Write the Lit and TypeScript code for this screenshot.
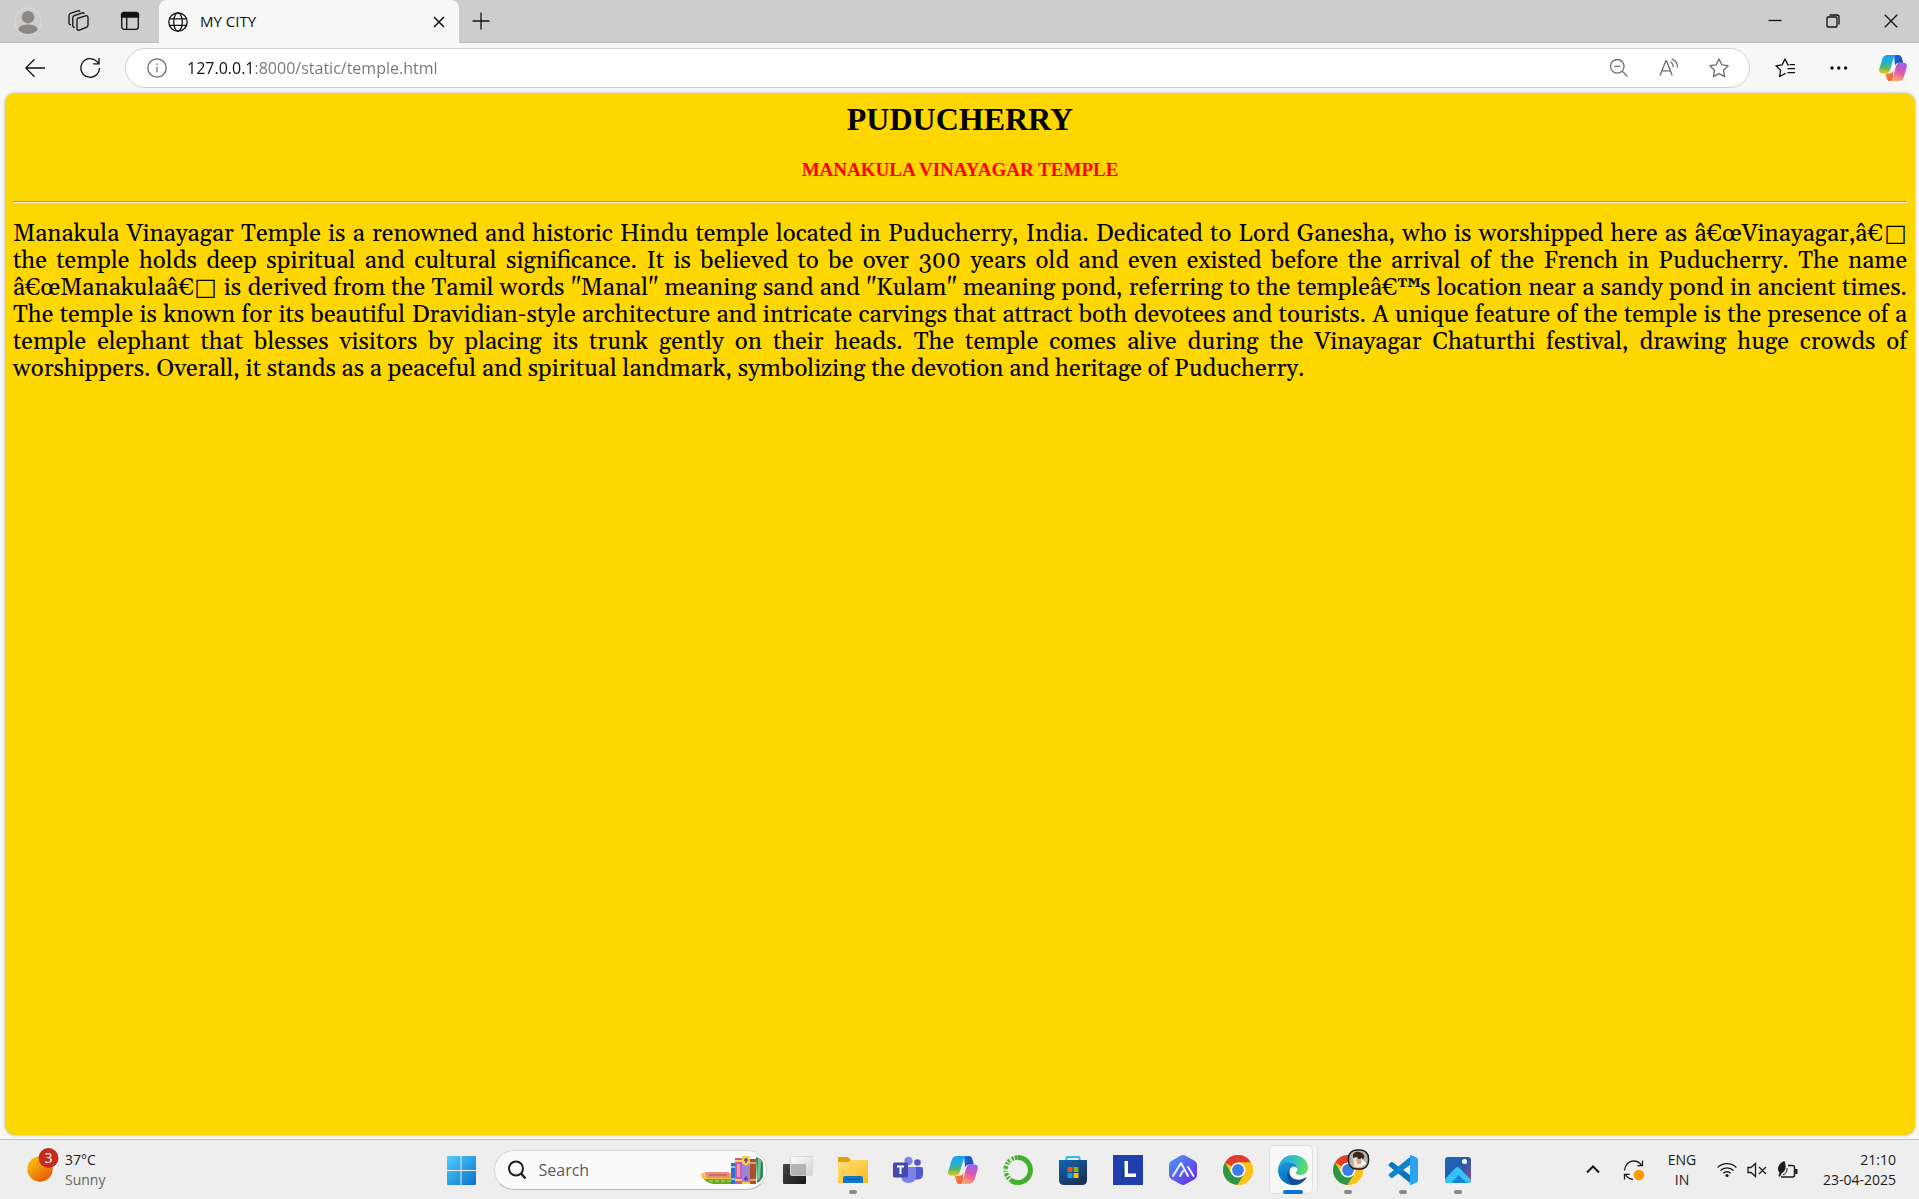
import { LitElement, html, svg, css, type TemplateResult } from "lit";
import { customElement, property } from "lit/decorators.js";
import { classMap } from "lit/directives/class-map.js";

/* Ribbon-shaped assistant logo, shared by the toolbar and the taskbar. */
const copilot = (id: string) => svg`
  <defs>
    <linearGradient id="${id}a" x1="0" y1="0" x2="0" y2="1">
      <stop offset="0" stop-color="#1aa0f0"/><stop offset=".4" stop-color="#22b0d8"/>
      <stop offset=".68" stop-color="#5ab860"/><stop offset="1" stop-color="#f0c818"/>
    </linearGradient>
    <linearGradient id="${id}b" x1=".7" y1="0" x2=".3" y2="1">
      <stop offset="0" stop-color="#9a60f0"/><stop offset=".5" stop-color="#e058a8"/><stop offset="1" stop-color="#ffae68"/>
    </linearGradient>
    <linearGradient id="${id}c" x1="0" y1="0" x2="1" y2="1">
      <stop offset="0" stop-color="#1b6fe0"/><stop offset="1" stop-color="#1b3fae"/>
    </linearGradient>
    <linearGradient id="${id}d" x1="0" y1="0" x2="1" y2="1">
      <stop offset="0" stop-color="#f8a030"/><stop offset="1" stop-color="#f04a48"/>
    </linearGradient>
  </defs>
  <path fill="url(#${id}c)" d="M15 1h4.500c1.800 0 2.600 1 3.100 2.600l1.600 5.200h-4c-2.200 0-3.600 1-4.200 3z"/>
  <path fill="url(#${id}d)" d="M13.500 27H11c-1.900 0-2.700-1-3.200-2.600L6.300 19.400h4c2.300 0 3.400-1.200 4-3.100z"/>
  <path fill="url(#${id}a)" d="M8.600 1h8.300c-1.500.6-2 2-2.500 3.700l-3.300 11c-.8 2.600-2 3.700-4.400 3.700H3.600C.6 19.400-.4 17.600.400 14.600l2.700-9C4 2.600 5.700 1 8.600 1z"/>
  <path fill="url(#${id}b)" d="M19.400 27h-8c1.300-.6 1.900-2 2.400-3.700l3.200-11c.8-2.500 2-3.500 4.300-3.500h3.100c3 0 4 1.700 3.200 4.800l-2.700 8.900c-.9 3-2.600 4.500-5.500 4.500z"/>`;

const chrome = svg`
  <circle cx="15" cy="15" r="15" fill="#fbc116"/>
  <path fill="#e33b2e" d="M15 15 2 7.500A15 15 0 0 1 28 7.500H15z"/>
  <path fill="#2b9746" d="M2 7.500A15 15 0 0 0 14.500 30L21.500 18.700 15 15 8.500 18.700z"/>
  <path fill="#fbc116" d="M15 7.500h13A15 15 0 0 1 14.500 30l7-11.300z"/>
  <circle cx="15" cy="15" r="7.500" fill="#fff"/>
  <circle cx="15" cy="15" r="5.900" fill="#3b7de9"/>`;

const icons: Record<string, TemplateResult> = {
  avatar: html`<svg class="icon" width="28" height="28" viewBox="0 0 28 28">
    <defs><clipPath id="av"><circle cx="14" cy="14" r="13"/></clipPath></defs>
    <circle cx="14" cy="14" r="13" fill="#cfcdcb" stroke="#dedcda" stroke-width="1.200"/>
    <g clip-path="url(#av)" fill="#8c8886"><circle cx="14" cy="10.200" r="6.200"/><path d="M3.500 23.500c1-4 5-6 10.500-6s9.500 2 10.500 6a14 14 0 0 1-21 0z"/></g></svg>`,
  workspaces: html`<svg class="icon line" width="22" height="22" viewBox="0 0 22 22">
    <path d="M9.500 8.300 17.500 5.800q2.500-.6 2.500 1.700v7.700q0 1.300-1.300 1.900l-7.300 3q-2.400.6-2.400-1.600V10.200q0-1.300.5-1.900z"/>
    <path d="M6.800 17.400q-2 .2-2-1.800V7.800q0-1.600 1.600-2.200l7.800-2.800q1.700-.4 2.100 1.100"/>
    <path d="M3 14.800q-2 0-2-1.900V5.500q0-1.500 1.500-2.200l7.300-2.500q1.600-.4 2 .900"/></svg>`,
  tabs: html`<svg class="icon line" width="20" height="20" viewBox="0 0 20 20">
    <rect x="1.700" y="2" width="16.600" height="16.300" rx="2.600"/><path d="M1.500 6V4q0-2.500 2.500-2.500h12q2.500 0 2.500 2.500v2z" fill="currentColor"/><path d="M6.700 6v12"/></svg>`,
  globe: html`<svg class="icon line" width="20" height="20" viewBox="0 0 20 20">
    <circle cx="10" cy="10" r="9.200"/><ellipse cx="10" cy="10" rx="4.300" ry="9.200"/><path d="M1.700 6.800h16.600M1.700 13.300h16.600"/></svg>`,
  closeTab: html`<svg class="icon line" width="12" height="12" viewBox="0 0 12 12"><path stroke-width="1.500" d="m1 1 10 10M11 1 1 11"/></svg>`,
  plus: html`<svg class="icon line" width="18" height="18" viewBox="0 0 18 18"><path d="M9 .5v17M.5 9h17"/></svg>`,
  minimize: html`<svg class="icon line" width="14" height="14" viewBox="0 0 14 14"><path d="M.5 6.500h13"/></svg>`,
  restore: html`<svg class="icon line" width="14" height="14" viewBox="0 0 14 14"><rect x="1" y="3" width="10" height="10" rx="1"/><path d="M3.500 1H11q2 0 2 2v7.500"/></svg>`,
  close: html`<svg class="icon line" width="14" height="14" viewBox="0 0 14 14"><path d="m.8.800 12.400 12.400M13.200.8.800 13.200"/></svg>`,
  back: html`<svg class="icon line" width="20" height="20" viewBox="0 0 20 20"><path d="M20 10H.8M9.500 1.300.8 10l8.700 8.700"/></svg>`,
  reload: html`<svg class="icon line" width="22" height="22" viewBox="0 0 22 22"><path d="M20.500 11A9.300 9.300 0 1 1 17.800 4.400l1.900 2M20 1v5.800h-5.800"/></svg>`,
  info: html`<svg class="icon line" width="20" height="20" viewBox="0 0 20 20"><circle cx="10" cy="10" r="9.200"/><path d="M10 8.800v5.500M10 5.400v1.500"/></svg>`,
  zoomOut: html`<svg class="icon line" width="20" height="20" viewBox="0 0 20 20"><circle cx="8.300" cy="8.300" r="6.800"/><path d="m13.300 13.300 5.200 5.200M5.300 8.300h6"/></svg>`,
  read: html`<svg class="icon line" width="20" height="20" viewBox="0 0 20 20"><path d="M1 17.500 6.800 3h.7l5.700 14.500M3 12.800h8.200M11.200 3.800a6 6 0 0 1 3 5.500M12.800.8c3.600 1.500 5.700 4.700 5.700 8.800"/></svg>`,
  star: html`<svg class="icon line" width="20" height="20" viewBox="0 0 20 20"><path stroke-linejoin="round" d="m10 1 2.800 5.800 6.300.9-4.600 4.500 1.100 6.400L10 15.600l-5.600 3 1.100-6.400L.9 7.700l6.300-.9z"/></svg>`,
  favorites: html`<svg class="icon line" width="20" height="20" viewBox="0 0 20 20"><path stroke-linejoin="round" d="M10.500 15.400 4.600 18.500l1-6.200L1 7.800l6.100-.9L10 1l2.900 5.900 1 .2M12.500 10.700H20M12.500 14.700H20M14.500 6.700H20"/></svg>`,
  more: html`<svg class="icon" width="18" height="6" viewBox="0 0 18 6"><g fill="#111"><circle cx="2" cy="3" r="1.700"/><circle cx="8.800" cy="3" r="1.700"/><circle cx="15.600" cy="3" r="1.700"/></g></svg>`,
  copilotTop: html`<svg class="icon" width="28" height="28" viewBox="0 0 28 28">${copilot("p")}</svg>`,
  copilot: html`<svg class="icon" width="30" height="30" viewBox="0 0 28 28">${copilot("q")}</svg>`,
  weather: html`<svg class="icon" width="34" height="40" viewBox="0 0 34 40">
    <defs><linearGradient id="sun" x1=".1" y1=".1" x2=".8" y2=".9"><stop stop-color="#fbc30b"/><stop offset="1" stop-color="#e75b08"/></linearGradient></defs>
    <circle cx="13" cy="19" r="12.700" fill="url(#sun)"/><circle cx="21.500" cy="10" r="10" fill="#c42b1c" transform="translate(0 -2)"/>
    <text x="21.500" y="13" text-anchor="middle" font-size="14" fill="#fff">3</text></svg>`,
  start: html`<svg class="icon" width="30" height="30" viewBox="0 0 30 30">
    <defs><linearGradient id="st" x2="1" y2="1"><stop stop-color="#4fd0fb"/><stop offset="1" stop-color="#0a6fd0"/></linearGradient></defs>
    <path fill="url(#st)" d="M2 1h12.500v14H1V2q0-1 1-1zM15.500 1H29q1 0 1 1v13H15.500zM1 16h13.500v14H2q-1 0-1-1zM15.500 16H30v13q0 1-1 1H15.500z"/></svg>`,
  search: html`<svg class="icon" width="20" height="20" viewBox="0 0 20 20" fill="none" stroke="#222"><circle cx="9" cy="8.500" r="7" stroke-width="2"/><path d="m14 13.500 4.500 5" stroke-width="2.500"/></svg>`,
  books: html`<svg class="icon" width="64" height="30" viewBox="0 0 64 30">
    <path fill="#f3c545" d="M1 18h31v6H3q-2-2-2-6z"/><path fill="#f08a7c" d="M5 17h24l2 6H7z"/><path fill="#c96f61" d="M9 19h18v2H9z"/>
    <path fill="#6aa82c" d="M4 24h28v5H13q-6-1-9-5z"/><path stroke="#a4d44c" stroke-width="1.500" stroke-dasharray="4 2" d="M9 26h22"/>
    <rect x="31" y="8" width="4" height="21" fill="#2a72d4"/><path fill="#8cc0f4" d="M31 11h4v2h-4zM31 23h4v2h-4z"/>
    <rect x="35" y="3" width="7" height="26" fill="#cf5b9b"/><path fill="#f7cf70" d="M35 5h7v2h-7zM35 24h7v2h-7z"/><path fill="#e99ac4" d="M37 9h3v13h-3z"/>
    <rect x="42" y="1" width="8" height="28" fill="#a183da"/><path fill="#f5cf4a" d="M42 1h8v7l-4 3-4-3zM42 27h8v2h-8z"/><path stroke="#5a3ca8" stroke-width="1.500" d="M46 3v5M44 5h4M46 21v5M44 24h4"/>
    <rect x="50" y="4" width="6" height="25" fill="#a8512c"/><path fill="#eba15c" d="M50 7h6v2h-6zM50 24h6v2h-6z"/>
    <path fill="#2d8a55" d="M56 2q5 1 7 6v14q-2 4-6 6z"/><path fill="#75c394" d="m58 3 3 2-1 18-3 3z"/></svg>`,
  taskView: html`<svg class="icon" width="30" height="30" viewBox="0 0 30 30">
    <defs><linearGradient id="tv" x2="1" y2="1"><stop stop-color="#4a4946"/><stop offset="1" stop-color="#161616"/></linearGradient>
    <linearGradient id="tw" x2="1" y2="1"><stop stop-color="#fff"/><stop offset="1" stop-color="#cfcfcf"/></linearGradient></defs>
    <rect x="0" y="9" width="23" height="20" rx="1" fill="url(#tv)"/><rect x="7.500" y="1.500" width="22" height="19" rx="1" fill="url(#tw)" fill-opacity=".93" stroke="#d8d8d8"/>
    <path fill="#a6a6a6" fill-opacity=".75" d="M8 9h15v11.500H8z"/></svg>`,
  explorer: html`<svg class="icon" width="30" height="30" viewBox="0 0 30 30">
    <defs><linearGradient id="ex" x2="1" y2="1"><stop stop-color="#ffe07a"/><stop offset="1" stop-color="#fbb917"/></linearGradient></defs>
    <path fill="#e0a008" d="M0 3q0-1 1-1h8q1 0 2 1l2 2h16q1 0 1 1v5H0z"/><path fill="url(#ex)" d="M0 7h10q1 0 2-1l1-1h17v22q0 1-1 1H1q-1 0-1-1z"/>
    <path fill="#0f79c8" d="M5 28v-5q0-2 2-2h16q2 0 2 2v5z"/><path stroke="#0b4f91" d="M8 24.500h14"/></svg>`,
  teams: html`<svg class="icon" width="30" height="30" viewBox="0 0 30 30">
    <circle cx="15.500" cy="6" r="4.200" fill="#7b83eb"/><circle cx="24.500" cy="7.500" r="3.300" fill="#5059c9"/><path fill="#5059c9" d="M20 12h8.500q1.500 0 1.500 1.500V19q0 5-5 5.500h-5z"/>
    <path fill="#7b83eb" d="M10 12h11.500q1.500 0 1.500 1.500v7q0 7.500-7.500 7.500T8.500 21z"/><rect x="0" y="7.500" width="15" height="15" rx="1.500" fill="#444aaf"/>
    <path stroke="#fff" stroke-width="2" d="M4 11.500h7M7.500 11.500V19"/></svg>`,
  ring: html`<svg class="icon" width="30" height="30" viewBox="0 0 30 30" fill="none" stroke="#43b02a">
    <path stroke-width="5" d="M15 2.500a12.500 12.500 0 1 1-6 23.500"/><path stroke-width="4.500" stroke-dasharray="3 1.500 2 1" d="M9.500 26.200A12.500 12.500 0 0 1 15 2.500"/>
    <path stroke="#eee" stroke-width="1" d="m1 9 7 2M0 16l6-1M3 22l5-3M6 3l3 6"/></svg>`,
  store: html`<svg class="icon" width="30" height="30" viewBox="0 0 30 30">
    <defs><linearGradient id="so" x2=".7" y2="1"><stop stop-color="#0d66b8"/><stop offset="1" stop-color="#1c2f55"/></linearGradient></defs>
    <path fill="none" stroke="#28bdf2" stroke-width="2" d="M8.500 6V3q0-1 1-1h11q1 0 1 1v3"/><path fill="url(#so)" d="M1 5h28v20q0 5-5 5H6q-5 0-5-5z"/>
    <path fill="#f25022" d="M9.500 12h5v5h-5z"/><path fill="#7fba00" d="M15.500 12h5v5h-5z"/><path fill="#00a4ef" d="M9.500 18h5v5h-5z"/><path fill="#ffb900" d="M15.500 18h5v5h-5z"/></svg>`,
  letter: html`<svg class="icon" width="30" height="30" viewBox="0 0 30 30"><path fill="#1f3fae" d="M0 0h30v30H0z"/><path fill="#0a2f50" d="m9 24 3-18v14z"/><path fill="#fff" d="M11.500 6H15v12.500h8V22H11.500z"/></svg>`,
  hex: html`<svg class="icon" width="30" height="30" viewBox="0 0 30 30">
    <defs><linearGradient id="hx" x2="1" y2="1"><stop stop-color="#4a9cf4"/><stop offset="1" stop-color="#6a22e8"/></linearGradient></defs>
    <path fill="url(#hx)" d="M12.500.700q2.500-1.400 5 0l9 5.100Q29 7.300 29 10v10q0 2.700-2.500 4.200l-9 5.100q-2.500 1.400-5 0l-9-5.100Q1 22.700 1 20V10q0-2.700 2.500-4.200z"/>
    <path fill="none" stroke="#e8f2ff" stroke-width="2" stroke-linecap="round" stroke-linejoin="round" d="m5 21 8-13 7 13M12 21l3-5M20 12l5.500 9"/></svg>`,
  chrome: html`<svg class="icon" width="30" height="30" viewBox="0 0 30 30">${chrome}</svg>`,
  edge: html`<svg class="icon" width="30" height="30" viewBox="0 0 30 30">
    <defs><linearGradient id="e1" x1="0" y1=".3" x2="1" y2=".5"><stop stop-color="#1fa6e0"/><stop offset=".5" stop-color="#30c2c4"/><stop offset="1" stop-color="#62e05a"/></linearGradient>
    <linearGradient id="e2" x1="0" y1="0" x2=".6" y2="1"><stop stop-color="#1b9de2"/><stop offset="1" stop-color="#0b62b8"/></linearGradient></defs>
    <path fill="url(#e2)" d="M0 15C1 8 6 6 11 7c5 0 8 3 8.500 7-1-2-3.500-3-5.500-2-4 2-3 9 2 12 4 2 8 1 11-1-3 5-7 7-12 7C6 30 0 23 0 15z"/>
    <path fill="#124f9b" d="M12 13c-3 4-1 9 4 11 4 1.600 8 .6 11.500-1.500.7-.4 1 .2.600.9C25 28 20 30.500 15 30 9 27 7 18 12 13z"/>
    <path fill="url(#e1)" d="M0 14.500C.8 6 7 0 15 0c9 0 15 6 15 12.500 0 4.500-3.300 7.500-7.300 7.500-3 0-5-1-5-2 0-.7 1.600-1.300 1.600-4C19.300 10 15.500 7 11 7 5 7 1 10.500 0 14.500z"/></svg>`,
  chromeProfile: html`<svg class="icon" width="44" height="42" viewBox="0 0 44 42"><g transform="translate(7 6)">${chrome}</g>
    <rect x="22.500" y="1" width="20" height="19" rx="8" fill="#b9aea2" stroke="#1e1a18" stroke-width="1.500"/>
    <path fill="#f0e7df" d="M27 4h9v13q-4 3-8 0z"/><path fill="#3b2620" d="M27 5q3-4 9-1 3 2 2 6l-3-1-2 4-2-5-4 1z"/><path fill="#d8a588" d="M30 10h5v5h-4z"/><path fill="#fff" d="M36 11q4 1 4 4l-5 3z"/></svg>`,
  code: html`<svg class="icon" width="30" height="30" viewBox="0 0 30 30">
    <path fill="#0a74bd" d="m1 9 2-1.800q.8-.6 1.600 0L22 20v8L1 11q-1-1 0-2z"/><path fill="#1284cf" d="m1 21 2 1.800q.8.600 1.600 0L22 10V2L1 19q-1 1 0 2z"/>
    <path fill="#2ba3ef" d="M22 0q.5-.2 1 0l6 2.700q1 .5 1 1.600v21.400q0 1.100-1 1.600L23 30q-.6.200-1 0z"/></svg>`,
  photos: html`<svg class="icon" width="30" height="30" viewBox="0 0 30 30">
    <defs><linearGradient id="ph" x2="1" y2=".6"><stop stop-color="#176bbd"/><stop offset=".7" stop-color="#2a5aa8"/><stop offset="1" stop-color="#7a4f9c"/></linearGradient><clipPath id="pc"><rect x="2" y="2" width="26" height="26" rx="3"/></clipPath></defs>
    <g clip-path="url(#pc)"><path fill="url(#ph)" d="M0 0h30v30H0z"/><path fill="#35c3f5" d="M0 26 12.500 13q2-2 4 0L30 27v3H0z"/><path fill="#1483d3" d="m7 30 8.500-10L26 30z"/></g><circle cx="21.500" cy="6.500" r="2.500" fill="#fff"/></svg>`,
  chevron: html`<svg class="icon line" width="14" height="9" viewBox="0 0 14 9"><path stroke-width="2" d="m1 7.500 6-6 6 6"/></svg>`,
  sync: html`<svg class="icon line" width="22" height="22" viewBox="0 0 22 22"><path d="M1.500 11.500C2 5.500 6 2 10.500 2c3.300 0 6.500 1.700 8 4.500M19.500 1.500v5.200h-5.200M10 20.500c-3-.5-6-2-7.500-5M1.500 20.500v-5.200h5.200"/><circle cx="16" cy="16" r="5.300" fill="#ff9a00" stroke="none"/></svg>`,
  wifi: html`<svg class="icon line" width="20" height="16" viewBox="0 0 20 16"><path d="M.6 5.500a13.300 13.300 0 0 1 18.800 0M3.500 8.500a9.200 9.200 0 0 1 13 0M6.300 11.300a5.200 5.200 0 0 1 7.400 0"/><circle cx="10" cy="13.500" r="1.600" fill="currentColor" stroke="none"/></svg>`,
  mute: html`<svg class="icon line" width="20" height="16" viewBox="0 0 20 16"><path d="M1 5.500h3l4.500-4v13l-4.500-4H1zM12 5l7 7M19 5l-7 7"/></svg>`,
  battery: html`<svg class="icon line" width="22" height="18" viewBox="0 0 22 18"><path d="M11 4.500h4.500q2 0 2 2v7.500q0 2-2 2H4" stroke-width="1.500"/><path d="M19.300 8v5" stroke-width="2.400"/><path fill="currentColor" stroke="none" d="M7.500 0c2 5 1.500 10-2.500 12l-2 3.500H1.500l1-4C-1 8 2 2 7.500 0z"/><path d="M10 7q.5 5-4 7" stroke-width="1"/></svg>`,
};

const bodyLines = [
  "Manakula Vinayagar Temple is a renowned and historic Hindu temple located in Puducherry, India. Dedicated to Lord Ganesha, who is worshipped here as â€œVinayagar,â€□",
  "the temple holds deep spiritual and cultural significance. It is believed to be over 300 years old and even existed before the arrival of the French in Puducherry. The name",
  "â€œManakulaâ€□ is derived from the Tamil words \"Manal\" meaning sand and \"Kulam\" meaning pond, referring to the templeâ€™s location near a sandy pond in ancient times.",
  "The temple is known for its beautiful Dravidian-style architecture and intricate carvings that attract both devotees and tourists. A unique feature of the temple is the presence of a",
  "temple elephant that blesses visitors by placing its trunk gently on their heads. The temple comes alive during the Vinayagar Chaturthi festival, drawing huge crowds of",
  "worshippers. Overall, it stands as a peaceful and spiritual landmark, symbolizing the devotion and heritage of Puducherry.",
];

const shared = css`
  * { box-sizing: border-box; }
  button { display: flex; align-items: center; justify-content: center; flex: none; padding: 0; border: 0; background: none; color: inherit; font: inherit; }
  input { min-width: 0; padding: 0; border: 0; outline: 0; background: none; font: inherit; }
  .icon { display: block; flex: none; }
  .line { fill: none; stroke: currentColor; stroke-width: 1.3; }
`;

@customElement("browser-bar")
class BrowserBar extends LitElement {
  static styles = [shared, css`
    :host { display: block; color: #111; background: #f7f7f7; font-family: "Open Sans", sans-serif; }
    .tabs { display: flex; align-items: center; height: 43px; background: #cdcdcd; border-bottom: 1px solid #bfbfbf; }
    .tools { display: flex; align-items: center; width: 159px; padding-left: 2px; }
    .tools button { width: 51px; height: 42px; }
    .tab { display: flex; align-items: center; gap: 12px; width: 300px; height: 43px; margin-bottom: -1px; padding: 0 8px 0 9px; background: #f7f7f7; border-radius: 8px 8px 0 0; }
    .title { flex: 1; padding-bottom: 2px; font-size: 15px; line-height: 20px; }
    .tab button { width: 24px; height: 24px; }
    .new { width: 44px; height: 42px; }
    .window { display: flex; margin-right: -1px; margin-left: auto; }
    .window button { width: 58px; height: 42px; }
    .bar { display: flex; align-items: center; height: 50px; padding-right: 8px; }
    .nav { display: flex; width: 125px; padding-left: 7px; }
    .nav button { width: 55px; height: 40px; }
    .address { display: flex; flex: 1; align-items: center; height: 40px; padding: 0 5px 0 21px; border: 1px solid #d0d0d0; border-radius: 20px; background: #fff; color: #6d6d6d; }
    .address button { width: 50px; height: 38px; }
    .address .info { width: 20px; margin-right: 20px; }
    .url { flex: 1; height: 30px; font-size: 16px; color: transparent; background: linear-gradient(90deg, #111 66px, #757575 66px); background-clip: text; -webkit-background-clip: text; }
    .end { display: flex; margin-left: 8px; }
    .end button { width: 54px; height: 40px; }
    .end .pilot { width: 37px; margin-left: 8px; }
  `];
  render() {
    return html`
      <header class="tabs">
        <div class="tools">
          <button aria-label="Profile">${icons.avatar}</button>
          <button aria-label="Workspaces">${icons.workspaces}</button>
          <button aria-label="Tab actions">${icons.tabs}</button>
        </div>
        <div class="tab">${icons.globe}<span class="title">MY CITY</span><button aria-label="Close tab">${icons.closeTab}</button></div>
        <button class="new" aria-label="New tab">${icons.plus}</button>
        <div class="window">
          <button aria-label="Minimize">${icons.minimize}</button>
          <button aria-label="Restore">${icons.restore}</button>
          <button aria-label="Close">${icons.close}</button>
        </div>
      </header>
      <nav class="bar">
        <div class="nav"><button aria-label="Back">${icons.back}</button><button aria-label="Reload">${icons.reload}</button></div>
        <div class="address">
          <button class="info" aria-label="Site information">${icons.info}</button>
          <input class="url" type="text" aria-label="Address" value="127.0.0.1:8000/static/temple.html" spellcheck="false">
          <button aria-label="Zoom">${icons.zoomOut}</button>
          <button aria-label="Read aloud">${icons.read}</button>
          <button aria-label="Add to favorites">${icons.star}</button>
        </div>
        <div class="end">
          <button aria-label="Favorites">${icons.favorites}</button>
          <button aria-label="Settings and more">${icons.more}</button>
          <button class="pilot" aria-label="Copilot">${icons.copilotTop}</button>
        </div>
      </nav>`;
  }
}

@customElement("temple-page")
class TemplePage extends LitElement {
  static styles = css`
    :host { display: block; padding: 8px; background: #ffd700; border-radius: 10px; box-shadow: 0 0 3px #aaa; color: #000; font-family: "Liberation Serif", serif; }
    h1, h2 { margin: 0; text-align: center; }
    h1 { font-size: 32px; line-height: 36px; }
    h2 { margin: 22px 0 21px; color: #f00; font-size: 19px; line-height: 21px; }
    hr { margin: 0; border: 1px solid; border-color: #9a9a9a #eee #eee #9a9a9a; }
    p { margin: 18px 0 0; font-family: Georgia, Gelasio, "DejaVu Sans", serif; font-size: 24px; line-height: 27px; }
    .row { display: block; text-align: justify; text-align-last: justify; }
    .row:last-child { text-align-last: left; }
  `;
  render() {
    return html`<h1>PUDUCHERRY</h1><h2>MANAKULA VINAYAGAR TEMPLE</h2><hr>
      <p>${bodyLines.map((l) => html`<span class="row">${l} </span>`)}</p>`;
  }
}

interface App { label: string; icon: string; state?: "open" | "active"; }

const apps: App[] = [
  { label: "Task view", icon: "taskView" },
  { label: "File Explorer", icon: "explorer", state: "open" },
  { label: "Teams", icon: "teams" },
  { label: "Copilot", icon: "copilot" },
  { label: "Anaconda", icon: "ring" },
  { label: "Store", icon: "store" },
  { label: "L", icon: "letter" },
  { label: "A", icon: "hex" },
  { label: "Chrome", icon: "chrome" },
  { label: "Edge", icon: "edge", state: "active" },
  { label: "Chrome profile", icon: "chromeProfile", state: "open" },
  { label: "Code", icon: "code", state: "open" },
  { label: "Photos", icon: "photos", state: "open" },
];

@customElement("task-bar")
class TaskBar extends LitElement {
  @property({ attribute: false }) apps: App[] = [];
  static styles = [shared, css`
    :host { display: grid; grid-template-columns: 1fr auto 1fr; align-items: center; height: 59px; border-top: 1px solid #bdbdbd; background: #eee; color: #1b1b1b; font: 14px/20px "Open Sans", sans-serif; }
    .weather { display: flex; gap: 4px; justify-self: start; padding-left: 27px; text-align: left; }
    .weather .icon { overflow: visible; }
    .weather span { display: block; }
    .weather .sky { color: #666; }
    .middle { display: flex; align-items: center; }
    .app { position: relative; width: 55px; height: 49px; }
    .app.active::before { content: ""; position: absolute; inset: 0 8px 0 3px; border: 1px solid #e0e0e0; border-radius: 5px; background: #f8f8f8; box-shadow: 5px 0 0 -1px #f4f4f4, 6px 0 0 -1px #dedede; }
    .app .icon { position: relative; }
    .app.open::after, .app.active::after { content: ""; position: absolute; bottom: 0; width: 8px; height: 4px; border-radius: 2px; background: #888; }
    .app.active::after { width: 20px; background: #0a74d4; }
    .search { display: flex; align-items: center; gap: 12px; width: 273px; height: 40px; margin: 0 4px 0 5px; padding: 0 2px 0 12px; border: 1px solid #dadada; border-bottom-color: #bbb; border-radius: 20px; background: #fafafa; }
    .search input { flex: 1; font-size: 16px; line-height: 22px; color: #555; }
    .search input::placeholder { color: #5b5b5b; }
    .tray { display: flex; align-items: center; justify-self: end; padding-right: 23px; }
    .tray button { height: 44px; }
    .up { width: 40px; }
    .sync { width: 42px; }
    .lang { width: 54px; }
    .net { width: 98px; }
    .net .icon { margin: 0 5px; }
    .clock { width: 89px; text-align: right; }
    .tray .clock { justify-content: flex-end; }
  `];
  render() {
    return html`
      <button class="weather">${icons.weather}<span><span>37°C</span><span class="sky">Sunny</span></span></button>
      <div class="middle">
        <button class="app" aria-label="Start">${icons.start}</button>
        <label class="search">${icons.search}<input type="text" placeholder="Search" aria-label="Search">${icons.books}</label>
        ${this.apps.map((a) => html`<button class=${classMap({ app: true, open: a.state === "open", active: a.state === "active" })} aria-label=${a.label}>${icons[a.icon]}</button>`)}
      </div>
      <div class="tray">
        <button class="up" aria-label="Hidden icons">${icons.chevron}</button>
        <button class="sync" aria-label="Updates">${icons.sync}</button>
        <button class="lang">ENG<br>IN</button>
        <button class="net" aria-label="Network, sound, battery">${icons.wifi}${icons.mute}${icons.battery}</button>
        <button class="clock">21:10<br>23-04-2025</button>
      </div>`;
  }
}

@customElement("app-root")
class AppRoot extends LitElement {
  static styles = css`
    :host { display: flex; flex-direction: column; min-height: 100vh; background: #f7f7f7; }
    .page { flex: 1; margin: 0 4px 4px 5px; }
  `;
  render() {
    return html`<browser-bar></browser-bar><temple-page class="page"></temple-page><task-bar .apps=${apps}></task-bar>`;
  }
}
